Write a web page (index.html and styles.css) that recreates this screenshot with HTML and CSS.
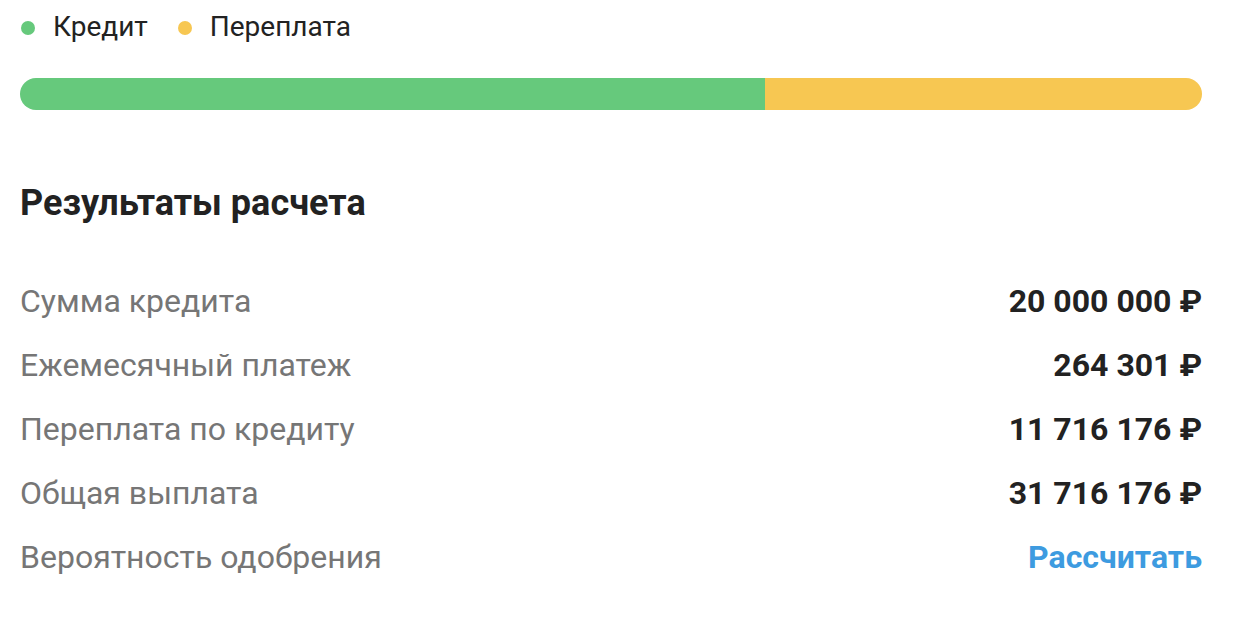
FILE: index.html
```html
<!DOCTYPE html>
<html lang="ru">
<head>
  <meta charset="UTF-8" />
  <meta name="viewport" content="width=device-width, initial-scale=1" />
  <title>Кредитный калькулятор | Результаты</title>
  <link rel="stylesheet" href="styles.css">
</head>
<body>
  <div class="results">
    <!-- Legend -->
    <div class="legend">
      <span class="legend-item"><span class="dot dot-credit"></span>Кредит</span>
      <span class="legend-item"><span class="dot dot-over"></span>Переплата</span>
    </div>

    <!-- Credit / overpayment bar -->
    <div class="ratio-bar">
      <div class="ratio-credit" style="width: 63.06%;"></div>
      <div class="ratio-over"></div>
    </div>

    <h2>Результаты расчета</h2>

    <div class="result-list">
      <div class="result-row">
        <span class="label">Сумма кредита</span>
        <span class="value">20 000 000 ₽</span>
      </div>
      <div class="result-row">
        <span class="label">Ежемесячный платеж</span>
        <span class="value">264 301 ₽</span>
      </div>
      <div class="result-row">
        <span class="label">Переплата по кредиту</span>
        <span class="value">11 716 176 ₽</span>
      </div>
      <div class="result-row">
        <span class="label">Общая выплата</span>
        <span class="value">31 716 176 ₽</span>
      </div>
      <div class="result-row">
        <span class="label">Вероятность одобрения</span>
        <a class="value link" href="#">Рассчитать</a>
      </div>
    </div>
  </div>
</body>
</html>
```

FILE: styles.css
```css
body {
  margin: 0;
  font-family: Roboto, "Liberation Sans", sans-serif;
  background-color: #ffffff;
  color: #222222;
}

.results {
  width: 1182px;
  padding: 10px 20px 0;
}

.legend {
  display: flex;
  gap: 29px;
  font-size: 28px;
  line-height: 34px;
}

.legend-item {
  display: flex;
  align-items: center;
}

.dot {
  width: 14px;
  height: 14px;
  border-radius: 50%;
  margin: 1px 18px 0 1px;
}

.dot-credit {
  background-color: #66c97c;
}

.dot-over {
  background-color: #f7c752;
}

.ratio-bar {
  display: flex;
  height: 32px;
  margin-top: 34px;
  border-radius: 16px;
  overflow: hidden;
}

.ratio-credit {
  background-color: #66c97c;
}

.ratio-over {
  flex: 1;
  background-color: #f7c752;
}

h2 {
  margin: 73px 0 46px;
  font-size: 36px;
  line-height: 40px;
  font-weight: 700;
}

.result-row {
  display: flex;
  justify-content: space-between;
  font-size: 32px;
  line-height: 64px;
}

.label {
  color: #767676;
}

.value {
  font-weight: 700;
}

.link {
  color: #3d9be0;
  text-decoration: none;
}
```
